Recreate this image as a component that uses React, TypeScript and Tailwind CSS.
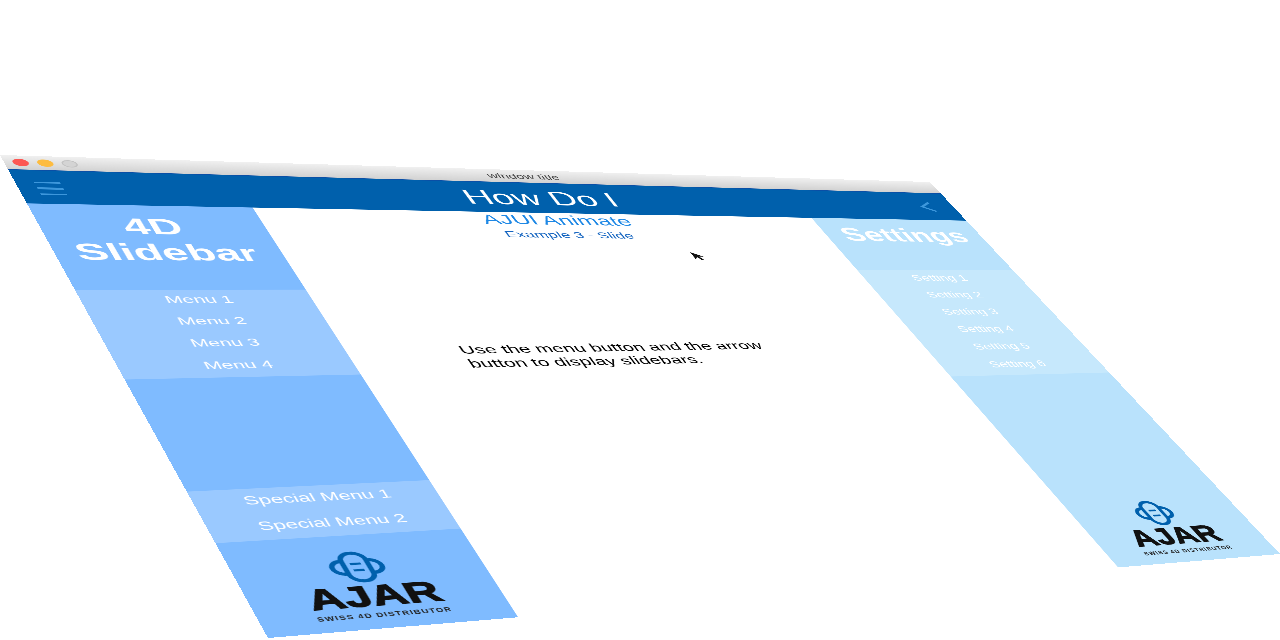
import React from 'react';

function AjarLogo({ className }: { className: string }) {
  return (
    <div className={`flex flex-col items-center pt-[18px] ${className}`}>
      <svg width="36" height="34" viewBox="0 0 36 34" fill="none" stroke="#0060ac" strokeWidth="3.4">
        <rect x="10" y="1.7" width="16" height="30.6" rx="8" />
        <path d="M10 10H9a7 7 0 0 0 0 14h1M26 10h1a7 7 0 0 1 0 14h-1" />
        <path d="M14.5 13.5h7M14.5 20.5h7" strokeWidth="2.2" />
      </svg>
      <div className="mt-[3px] h-[24px] text-[31px] leading-[24px] font-bold text-[#111] [-webkit-text-stroke:1px_#111]">AJAR</div>
      <div className="mt-[4px] h-[8px] text-[6px] leading-[8px] font-bold tracking-[0.75px] whitespace-nowrap text-[#222]">SWISS 4D DISTRIBUTOR</div>
    </div>
  );
}

export default function App() {
  const menuItems = ['Menu 1', 'Menu 2', 'Menu 3', 'Menu 4'];
  const specialItems = ['Special Menu 1', 'Special Menu 2'];
  const settingItems = ['Setting 1', 'Setting 2', 'Setting 3', 'Setting 4', 'Setting 5', 'Setting 6'];

  return (
    <div className="h-screen w-full overflow-hidden bg-white font-['Liberation_Sans',Arial,sans-serif]">
      {/* Window, tilted onto the page with one perspective matrix */}
      <div className="relative flex h-[600px] w-[800px] origin-top-left flex-col bg-white will-change-transform [transform:matrix3d(1.46452,0.09285,0,0.00032475,0.37033,0.6233,0,-0.0002848,0,0,1,0,0,155,0,1)]">
        {/* Title bar */}
        <div className="relative flex h-[21px] shrink-0 items-center gap-[6px] bg-gradient-to-b from-[#f0f0f0] to-[#d2d2d2] pl-[6px]">
          <span className="h-[11px] w-[11px] rounded-full bg-[#fc5753]" />
          <span className="h-[11px] w-[11px] rounded-full bg-[#fdbc40]" />
          <span className="h-[11px] w-[11px] rounded-full border border-[#c2c2c2] bg-[#d4d4d4]" />
          <span className="absolute inset-x-0 text-center text-[12px] text-[#444]">window title</span>
        </div>

        {/* Nav bar */}
        <div className="flex h-[50px] shrink-0 items-center justify-between border-t border-[#0a4fa6] bg-[#0060ac] pl-[13px] pr-[22px]">
          <div className="mt-[4px] flex w-[18px] flex-col gap-[6px]">
            <span className="h-[2.5px] bg-[#3d97dc]" />
            <span className="h-[2.5px] bg-[#3d97dc]" />
            <span className="h-[2.5px] bg-[#3d97dc]" />
          </div>
          <span className="ml-[7px] text-[32px] leading-none text-white">How Do I</span>
          <svg width="14" height="18" viewBox="0 0 14 18" fill="none" stroke="#3d97dc" strokeWidth="2.5">
            <path d="M13 1 2 9l11 8" />
          </svg>
        </div>

        <div className="flex min-h-0 flex-1">
          {/* Left slidebar */}
          <aside className="flex w-[160px] shrink-0 flex-col bg-[#7fbbff] text-white">
            <div className="h-[120px] pr-[4px] pt-[13px] text-center text-[32px] leading-[37px] font-bold">
              4D
              <br />
              Slidebar
            </div>
            <div className="flex h-[116px] flex-col bg-[#9ac9ff]">
              {menuItems.map((item) => (
                <div key={item} className="flex h-[29px] items-center justify-center pb-[3px] text-sm">
                  {item}
                </div>
              ))}
            </div>
            <div className="flex-1" />
            <div className="flex h-[58px] flex-col bg-[#9ac9ff]">
              {specialItems.map((item) => (
                <div key={item} className="flex h-[29px] items-center justify-center pb-[3px] text-sm">
                  {item}
                </div>
              ))}
            </div>
            <AjarLogo className="h-[101px] pr-[4px]" />
          </aside>

          {/* Main content */}
          <main className="min-w-0 flex-1 pl-[84px] text-center">
            <div className="-ml-[83px] text-[21px] leading-[23px] text-[#1e88e5]">AJUI Animate</div>
            <div className="-ml-[81px] mt-[4px] text-sm leading-[16px] text-[#1565c0]">Example 3 - Slide</div>
            <p className="mt-[153px] w-[280px] text-left text-[15.8px] leading-[19px] text-black">
              Use the menu button and the arrow button to display slidebars.
            </p>
          </main>

          {/* Right slidebar */}
          <aside className="flex w-[160px] shrink-0 flex-col bg-[#b9e2fc] text-white">
            <div className="h-[88px] pt-[10px] text-center text-[32px] leading-[37px] font-bold">Settings</div>
            <div className="flex h-[170px] flex-col bg-[#c6e8fc]">
              {settingItems.map((item) => (
                <div key={item} className="flex h-[28px] items-center justify-center pb-[3px] pr-[9px] text-sm">
                  {item}
                </div>
              ))}
            </div>
            <div className="flex-1" />
            <AjarLogo className="h-[101px] pr-[6px]" />
          </aside>
        </div>

        {/* Mouse pointer */}
        <svg className="absolute left-[495px] top-[131px]" width="12" height="16" viewBox="0 0 12 16" fill="#111">
          <path d="M1 1v11l3-3 2 5 2-1-2-5h4z" />
        </svg>
      </div>
    </div>
  );
}
